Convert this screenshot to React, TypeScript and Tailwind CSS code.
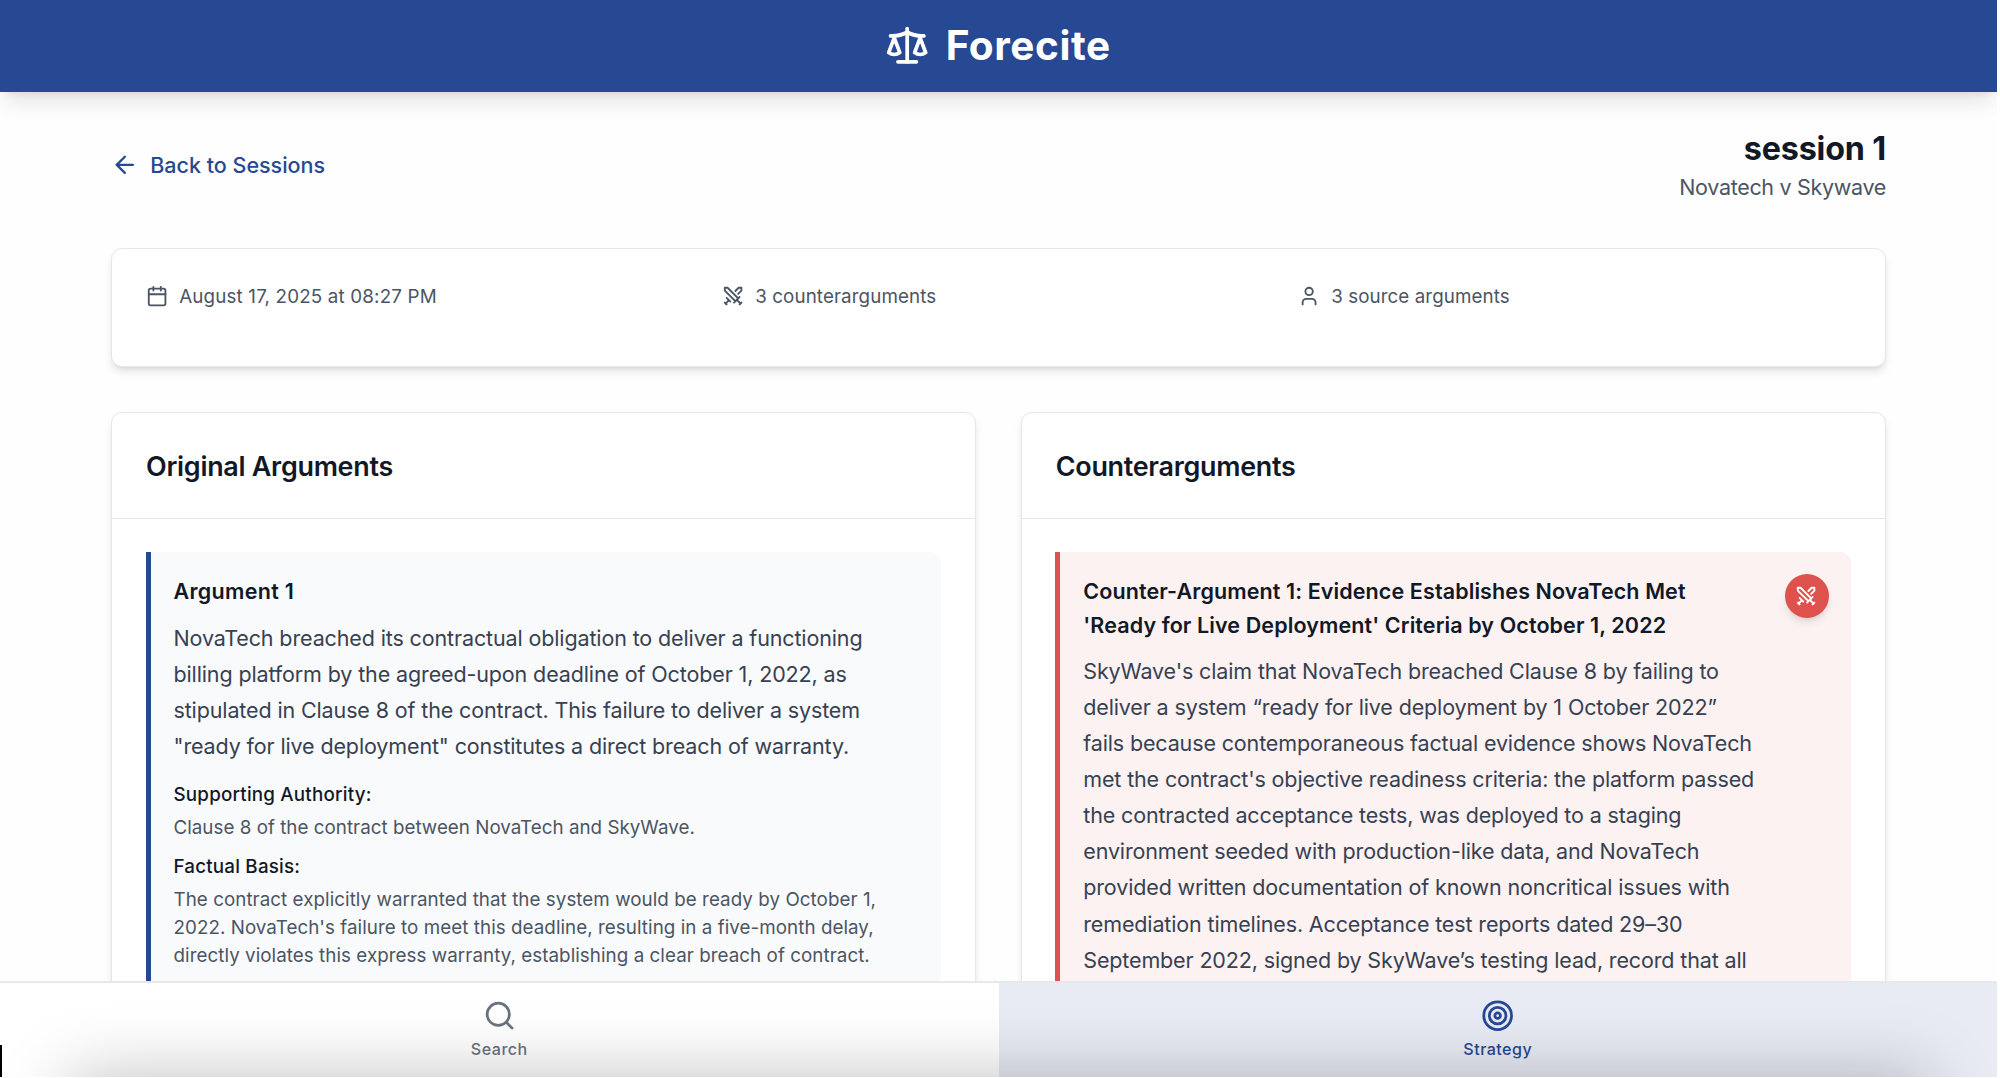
import type { ReactNode } from 'react';
import { ArrowLeft, Calendar, Scale, Search, Swords, Target, User } from 'lucide-react';

const argumentLines = [
  'NovaTech breached its contractual obligation to deliver a functioning',
  'billing platform by the agreed-upon deadline of October 1, 2022, as',
  'stipulated in Clause 8 of the contract. This failure to deliver a system',
  '"ready for live deployment" constitutes a direct breach of warranty.',
];

const factualLines = [
  'The contract explicitly warranted that the system would be ready by October 1,',
  "2022. NovaTech's failure to meet this deadline, resulting in a five-month delay,",
  'directly violates this express warranty, establishing a clear breach of contract.',
];

const counterTitle = [
  'Counter-Argument 1: Evidence Establishes NovaTech Met',
  "'Ready for Live Deployment' Criteria by October 1, 2022",
];

const counterLines = [
  "SkyWave's claim that NovaTech breached Clause 8 by failing to",
  'deliver a system “ready for live deployment by 1 October 2022”',
  'fails because contemporaneous factual evidence shows NovaTech',
  "met the contract's objective readiness criteria: the platform passed",
  'the contracted acceptance tests, was deployed to a staging',
  'environment seeded with production-like data, and NovaTech',
  'provided written documentation of known noncritical issues with',
  'remediation timelines. Acceptance test reports dated 29–30',
  'September 2022, signed by SkyWave’s testing lead, record that all',
];

function Lines({ lines }: { lines: string[] }) {
  return (
    <>
      {lines.map((line) => (
        <span key={line} className="block whitespace-nowrap">
          {line}
        </span>
      ))}
    </>
  );
}

function Panel({ title, children }: { title: string; children: ReactNode }) {
  return (
    <section className="flex-1 rounded-[11px] border-[1.4px] border-[#e5e7eb] bg-white shadow-[0_5.5px_8px_-1.4px_rgba(0,0,0,0.1),0_3px_5.5px_-3px_rgba(0,0,0,0.1)]">
      <div className="border-b-[1.4px] border-[#e5e7eb] px-[34px] pt-[34.5px] pb-[32px]">
        <h2 className="text-[26.9px] leading-[38.5px] font-semibold tracking-[-0.01em] text-[#111827]">{title}</h2>
      </div>
      <div className="pt-[33.8px] pr-[34.5px] pl-[33.5px]">{children}</div>
    </section>
  );
}

function Meta({ icon, label, className }: { icon: ReactNode; label: string; className: string }) {
  return (
    <div className="flex items-center gap-[11.5px] text-[#4b5563]">
      {icon}
      <span className={`text-[18.8px] leading-[28px] ${className}`}>{label}</span>
    </div>
  );
}

export default function App() {
  return (
    <div className="relative h-[1078px] w-[2000px] overflow-hidden bg-white font-[Inter,sans-serif]">
      <div className="flex h-[1077px] w-[1997px] flex-col overflow-hidden bg-[#fefefe]">
        <header className="relative z-10 flex h-[92px] shrink-0 items-center justify-center gap-[16px] bg-[#274893] text-white shadow-[0_14px_21px_-4px_rgba(0,0,0,0.1),0_5.5px_8px_-5.5px_rgba(0,0,0,0.1)]">
          <Scale size={44.4} className="-mt-[2px] -ml-px" />
          <h1 className="text-[40.5px] leading-[50px] font-bold tracking-[0.0145em]">Forecite</h1>
        </header>

        <main className="min-h-0 flex-1 overflow-hidden px-[111px] pt-[34px]">
          <div className="flex h-[78px] items-center justify-between">
            <a className="flex items-center gap-[11.5px] text-[#274893]">
              <ArrowLeft size={27.7} className="-mt-px" />
              <span className="text-[21.5px] leading-[33px] font-[450]">Back to Sessions</span>
            </a>
            <div className="text-right">
              <h2 className="text-[32.3px] leading-[45px] font-bold tracking-[-0.0054em] text-[#111827]">session 1</h2>
              <p className="text-[21.5px] leading-[33px] tracking-[-0.0148em] text-[#4b5563]">Novatech v Skywave</p>
            </div>
          </div>

          <div className="mt-[44px] grid h-[119px] grid-cols-3 items-start gap-[22px] rounded-[11px] border-[1.4px] border-[#e5e7eb] bg-white px-[33.5px] pt-[33.5px] shadow-[0_5.5px_8px_-1.4px_rgba(0,0,0,0.1),0_3px_5.5px_-3px_rgba(0,0,0,0.1)]">
            <Meta icon={<Calendar size={22.2} />} label="August 17, 2025 at 08:27 PM" className="tracking-[0.0085em]" />
            <Meta icon={<Swords size={22.2} />} label="3 counterarguments" className="tracking-[0.005em]" />
            <Meta icon={<User size={22.2} />} label="3 source arguments" className="tracking-[0.004em]" />
          </div>

          <div className="mt-[44.5px] flex h-[700px] gap-[44.5px]">
            <Panel title="Original Arguments">
              <article className="h-[600px] rounded-r-[11px] border-l-[5.6px] border-[#274893] bg-[#f9fafc] p-[23px]">
                <h3 className="text-[21.5px] leading-[33.3px] font-semibold tracking-[0.0145em] text-[#111827]">Argument 1</h3>
                <p className="mt-[11px] text-[21.5px] leading-[36.1px] tracking-[-0.006em] text-[#374151]">
                  <Lines lines={argumentLines} />
                </p>
                <h4 className="mt-[17px] text-[18.8px] leading-[27.7px] font-medium tracking-[0.0107em] text-[#111827]">
                  Supporting Authority:
                </h4>
                <p className="mt-[5.5px] text-[18.8px] leading-[27.7px] tracking-[0.001em] text-[#4b5563]">
                  Clause 8 of the contract between NovaTech and SkyWave.
                </p>
                <h4 className="mt-[11px] text-[18.8px] leading-[27.7px] font-medium tracking-[0.0107em] text-[#111827]">
                  Factual Basis:
                </h4>
                <p className="mt-[5.5px] text-[18.8px] leading-[27.8px] tracking-[0.0027em] text-[#4b5563]">
                  <Lines lines={factualLines} />
                </p>
              </article>
            </Panel>

            <Panel title="Counterarguments">
              <article className="flex h-[600px] items-start justify-between rounded-r-[11px] border-l-[5.6px] border-[#dd524c] bg-[#fcf2f1] p-[23px] pr-[22px]">
                <div>
                  <h3 className="text-[21.5px] leading-[33.3px] font-semibold tracking-[0.005em] text-[#111827]">
                    <Lines lines={counterTitle} />
                  </h3>
                  <p className="mt-[11px] text-[21.5px] leading-[36.1px] tracking-[-0.0065em] text-[#374151]">
                    <Lines lines={counterLines} />
                  </p>
                </div>
                <button className="-mt-px flex size-[44px] shrink-0 items-center justify-center rounded-full bg-[#dd524c] text-white shadow-[0_5.5px_8px_-1.4px_rgba(0,0,0,0.1),0_3px_5.5px_-3px_rgba(0,0,0,0.1)]">
                  <Swords size={22.2} />
                </button>
              </article>
            </Panel>
          </div>
        </main>

        <nav className="relative grid h-[96px] shrink-0 grid-cols-2 overflow-hidden border-t-2 border-[#e7e8ec] bg-white">
          <a className="flex flex-col items-center pt-[16px] text-[#6b7280]">
            <Search size={33.3} />
            <span className="mt-[6.2px] text-[16.1px] leading-[22px] font-[450] tracking-[0.03em]">Search</span>
          </a>
          <a className="flex flex-col items-center bg-[#e8ebf4] pt-[16px] text-[#274893]">
            <Target size={33.3} />
            <span className="mt-[6.2px] text-[16.1px] leading-[22px] font-[450] tracking-[0.028em]">Strategy</span>
          </a>
          <div className="pointer-events-none absolute top-full right-[70px] left-[70px] h-[200px] shadow-[0_0_70px_rgba(0,0,0,0.25)]" />
        </nav>
      </div>
      <div className="absolute top-[1045px] left-0 h-[32px] w-[2px] bg-black" />
    </div>
  );
}
